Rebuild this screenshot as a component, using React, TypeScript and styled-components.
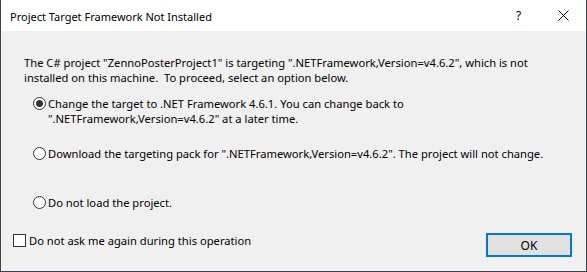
import styled, { createGlobalStyle } from 'styled-components';

const GlobalStyle = createGlobalStyle`
  html, body {
    margin: 0;
    padding: 0;
    background: #f0f0f0;
  }
  body {
    font-family: "Noto Sans", "Liberation Sans", sans-serif;
    font-size: 11.2px;
    color: #000;
  }
`;

const Window = styled.div`
  box-sizing: border-box;
  width: 587px;
  height: 272px;
  display: flex;
  flex-direction: column;
  border: 1px solid #3c4150;
  border-top: none;
  background: #f0f0f0;
`;

const TitleBar = styled.div`
  height: 31px;
  flex-shrink: 0;
  display: flex;
  align-items: center;
  background: #fff;
  padding-left: 9px;
`;

const Title = styled.div`
  flex: 1;
  font-size: 11px;
  padding-top: 1px;
`;

const TitleButton = styled.div`
  width: 45px;
  height: 30px;
  display: flex;
  align-items: center;
  justify-content: center;
  font-size: 12px;
`;

const Body = styled.div`
  flex: 1;
  display: flex;
  flex-direction: column;
  padding: 24px 14px 0 12px;
`;

const Message = styled.p`
  margin: 0 0 11px 11px;
  line-height: 15px;
  white-space: pre-line;
`;

const OptionList = styled.div`
  display: flex;
  flex-direction: column;
  padding-left: 20px;
`;

const Option = styled.label`
  display: flex;
  align-items: flex-start;
  min-height: 49.5px;
  line-height: 15px;

  &:last-child {
    min-height: 15px;
  }
`;

interface RadioProps {
  checked: boolean;
}

const Radio = styled.span<RadioProps>`
  box-sizing: border-box;
  flex-shrink: 0;
  width: 13px;
  height: 13px;
  margin: 1px 2px 0 0;
  border: 1px solid #333;
  border-radius: 50%;
  background: #fff;
  display: flex;
  align-items: center;
  justify-content: center;

  &::after {
    content: '';
    width: 7px;
    height: 7px;
    border-radius: 50%;
    background: #333;
    display: ${({ checked }) => (checked ? 'block' : 'none')};
  }
`;

const OptionText = styled.span`
  white-space: pre-line;
`;

const Footer = styled.div`
  display: flex;
  justify-content: space-between;
  align-items: flex-start;
  margin-top: 23px;
`;

const CheckRow = styled.label`
  display: flex;
  align-items: center;
  line-height: 15px;
`;

const CheckBox = styled.span`
  box-sizing: border-box;
  width: 13px;
  height: 13px;
  margin-right: 3px;
  border: 1px solid #333;
  background: #fff;
`;

const OkButton = styled.button`
  box-sizing: border-box;
  width: 86px;
  height: 24px;
  border: 2px solid #0078d7;
  background: #e1e1e1;
  font: inherit;
  font-size: 12px;
  color: #000;
  padding: 0;
`;

const options = [
  {
    text: 'Change the target to .NET Framework 4.6.1. You can change back to\n".NETFramework,Version=v4.6.2" at a later time.',
    checked: true,
  },
  {
    text: 'Download the targeting pack for ".NETFramework,Version=v4.6.2". The project will not change.',
    checked: false,
  },
  { text: 'Do not load the project.', checked: false },
];

const CloseIcon = () => (
  <svg width="11" height="11" viewBox="0 0 11 11">
    <path d="M0.5 0.5 L10.5 10.5 M10.5 0.5 L0.5 10.5" stroke="#000" strokeWidth="1" />
  </svg>
);

export default function App() {
  return (
    <>
      <GlobalStyle />
      <Window>
        <TitleBar>
          <Title>Project Target Framework Not Installed</Title>
          <TitleButton>?</TitleButton>
          <TitleButton>
            <CloseIcon />
          </TitleButton>
        </TitleBar>
        <Body>
          <Message>
            {'The C# project "ZennoPosterProject1" is targeting ".NETFramework,Version=v4.6.2", which is not\ninstalled on this machine.\u00a0 To proceed, select an option below.'}
          </Message>
          <OptionList>
            {options.map((option, index) => (
              <Option key={index}>
                <Radio checked={option.checked} />
                <OptionText>{option.text}</OptionText>
              </Option>
            ))}
          </OptionList>
          <Footer>
            <CheckRow>
              <CheckBox />
              Do not ask me again during this operation
            </CheckRow>
            <OkButton>OK</OkButton>
          </Footer>
        </Body>
      </Window>
    </>
  );
}
